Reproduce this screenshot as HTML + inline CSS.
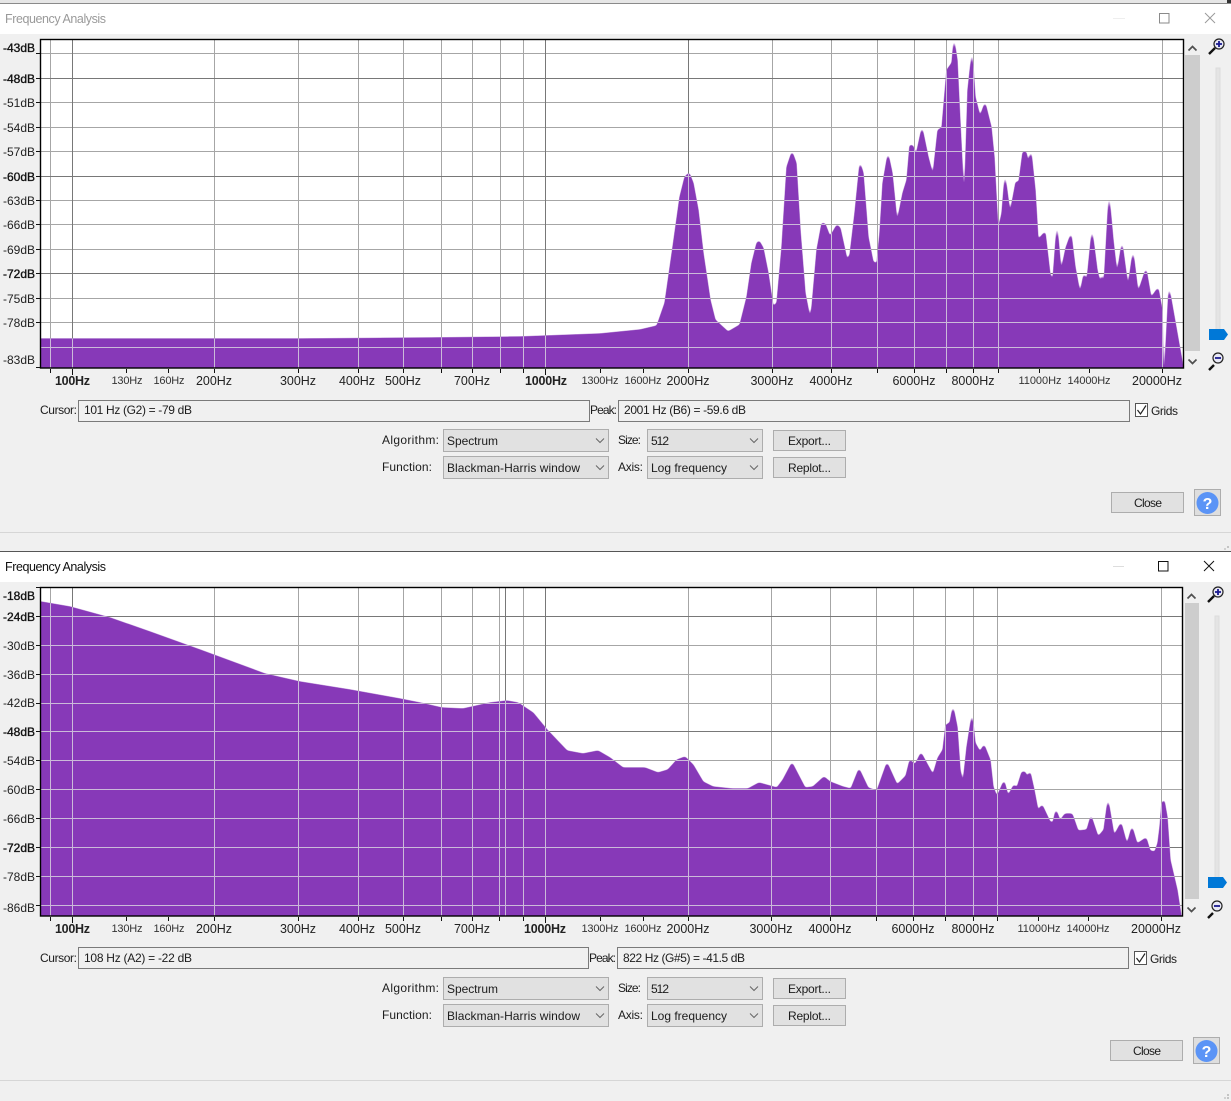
<!DOCTYPE html>
<html><head><meta charset="utf-8"><style>
html,body{margin:0;padding:0;background:#f0f0f0;width:1231px;height:1101px;overflow:hidden}
svg{display:block}
text{font-family:"Liberation Sans",sans-serif;font-size:12px;fill:#1c1c1c}
.s{font-size:11px;fill:#333}.m{font-size:12.5px;fill:#222}.b{font-size:12.5px;font-weight:bold;fill:#222}
.y{font-size:12px;text-anchor:end;fill:#222}.yb{font-size:12px;text-anchor:end;fill:#111;stroke:#111;stroke-width:.35}
.x text{text-anchor:middle}
.f{fill:#e1e1e1;stroke:#adadad}.bt{fill:#e1e1e1;stroke:#adadad}
.ch{fill:none;stroke:#666;stroke-width:1}
.box{fill:#f0f0f0;stroke:#7a7a7a}
</style></head><body>
<svg width="1231" height="1101" viewBox="0 0 1231 1101" xmlns="http://www.w3.org/2000/svg">
<defs>
<filter id="sm" filterUnits="userSpaceOnUse" x="0" y="0" width="1231" height="1101" color-interpolation-filters="sRGB">
<feGaussianBlur stdDeviation="1.2"/>
<feComponentTransfer><feFuncA type="linear" slope="4" intercept="-0.8"/></feComponentTransfer>
</filter>
<mask id="c1" maskUnits="userSpaceOnUse" x="0" y="0" width="1231" height="1101"><path fill="#fff" filter="url(#sm)" d="M30,378L30,339L41,339L300,339L430,338L520,337L600,334L640,330L657,326L665,303L673,247L680,197L685,177L689,173L693,183L698,210L703,253L710,300L715,320L728,332L740,325L747,297L752,263L757,243L759,241L763,248L768,273L773,307L777,303L782,247L787,167L792,152L796,163L800,230L805,293L810,319L812,307L817,250L822,223L825,224L830,237L837,225L840,228L847,260L850,255L855,213L860,163L863,173L868,237L873,262L877,264L880,233L883,183L888,154L892,173L897,223L903,193L907,180L910,145L913,146L916,156L922,128L928,157L933,176L938,130L942,128L947,70L952,63L954,40L957,60L960,123L963,183L965,185L968,90L972,53L975,97L980,117L985,103L991,127L994,157L998,232L1002,213L1005,176L1010,214L1016,182L1019,182L1023,152L1026,152L1028,163L1031,152L1035,190L1038,240L1045,232L1050,275L1053,280L1057,226L1061,272L1066,248L1071,234L1075,267L1080,294L1084,274L1087,281L1092,231L1097,270L1100,283L1102,275L1104,286L1109,196L1113,240L1117,275L1122,243L1128,288L1133,252L1138,293L1146,269L1151,298L1158,288L1162,310L1163,368L1165,366L1169,288L1183,367L1183,378Z"/></mask>
<mask id="c2" maskUnits="userSpaceOnUse" x="0" y="0" width="1231" height="1101"><path fill="#fff" filter="url(#sm)" d="M30,926L30,601L41,602L70,607L110,618L150,632L200,650L265,674L300,682L350,690L400,699L420,703L442,708L463,709L490,703L507,701L518,703L533,713L547,730L567,751L583,754L598,751L610,758L623,768L645,768L658,773L668,770L677,760L685,757L693,765L703,782L713,787L732,789L748,789L759,783L777,788L783,780L792,763L805,788L813,787L824,777L830,782L843,787L851,789L859,769L868,788L877,791L887,763L897,785L906,776L910,760L915,765L921,753L933,775L938,758L943,750L946,725L950,723L953,707L957,727L960,770L963,784L967,747L972,715L975,743L980,752L984,745L990,760L993,787L997,797L1004,781L1008,796L1014,785L1017,788L1022,772L1025,772L1027,777L1030,772L1034,790L1038,811L1042,805L1050,822L1053,823L1056,810L1060,821L1065,814L1072,814L1078,831L1087,830L1091,816L1098,837L1104,830L1108,800L1114,836L1121,823L1127,845L1132,827L1137,844L1146,838L1150,851L1155,852L1158,843L1160,827L1162,803L1164,800L1167,817L1170,860L1177,890L1181,916L1182,926Z"/></mask>
</defs>
<rect width="1231" height="1101" fill="#f0f0f0"/>

<!-- window 1 chrome -->
<rect x="0" y="0" width="1231" height="3" fill="#e6e6e6"/>
<rect x="0" y="3" width="1231" height="1" fill="#8a8a8a"/>
<rect x="1227" y="0" width="4" height="3" fill="#333"/>
<rect x="0" y="4" width="1231" height="30" fill="#fff"/>
<text x="5" y="23" textLength="101" style="fill:#9a9a9a;font-size:12.5px">Frequency Analysis</text>
<path d="M1113 18.5H1125" stroke="#eee" fill="none"/>
<rect x="1159.5" y="13.5" width="9.5" height="9.5" fill="none" stroke="#8a8a8a"/>
<path d="M1205 13L1215 23M1215 13L1205 23" stroke="#9a9a9a" fill="none"/>

<!-- plot 1 -->
<rect x="40" y="39" width="1144" height="329" fill="#fff"/>
<path shape-rendering="crispEdges" fill="none" stroke="#a6a6a6" d="M41 53.5H1183M41 102.5H1183M41 127.5H1183M41 151.5H1183M41 200.5H1183M41 224.5H1183M41 249.5H1183M41 298.5H1183M41 322.5H1183M41 347.5H1183M50.5 40V368M214.5 40V368M298.5 40V368M358.5 40V368M403.5 40V368M441.5 40V368M472.5 40V368M500.5 40V368M523.5 40V368M772.5 40V368M831.5 40V368M877.5 40V368M914.5 40V368M946.5 40V368M973.5 40V368M998.5 40V368M1162.5 40V368"/>
<path shape-rendering="crispEdges" fill="none" stroke="#787878" d="M41 78.5H1183M41 176.5H1183M41 273.5H1183M72.5 40V368M545.5 40V368M688.5 40V368"/>
<rect x="40" y="39" width="1144" height="329" fill="#8739b8" mask="url(#c1)"/>
<path mask="url(#c1)" shape-rendering="crispEdges" fill="none" stroke="#cbbad9" d="M41 53.5H1183M41 78.5H1183M41 102.5H1183M41 127.5H1183M41 151.5H1183M41 176.5H1183M41 200.5H1183M41 224.5H1183M41 249.5H1183M41 273.5H1183M41 298.5H1183M41 322.5H1183M41 347.5H1183M50.5 40V368M72.5 40V368M214.5 40V368M298.5 40V368M358.5 40V368M403.5 40V368M441.5 40V368M472.5 40V368M500.5 40V368M523.5 40V368M545.5 40V368M688.5 40V368M772.5 40V368M831.5 40V368M877.5 40V368M914.5 40V368M946.5 40V368M973.5 40V368M998.5 40V368M1162.5 40V368"/>
<rect x="40.5" y="39.5" width="1143" height="328.5" fill="none" stroke="#000" stroke-width="1.4"/>
<path shape-rendering="crispEdges" fill="none" stroke="#111" d="M36 53.5H40M36 78.5H40M36 102.5H40M36 127.5H40M36 151.5H40M36 176.5H40M36 200.5H40M36 224.5H40M36 249.5H40M36 273.5H40M36 298.5H40M36 322.5H40M36 367.5H40M50.5 369V373M72.5 369V375M126.5 369V373M168.5 369V373M214.5 369V373M298.5 369V373M358.5 369V373M403.5 369V373M441.5 369V373M472.5 369V373M500.5 369V373M523.5 369V373M545.5 369V375M600.5 369V373M643.5 369V373M688.5 369V373M772.5 369V373M831.5 369V373M877.5 369V373M914.5 369V373M946.5 369V373M973.5 369V373M998.5 369V373M1039.5 369V373M1089.5 369V373M1162.5 369V373"/>
<text class="yb" x="35" y="52">-43dB</text><text class="yb" x="35" y="83">-48dB</text><text class="y" x="35" y="107">-51dB</text><text class="y" x="35" y="132">-54dB</text><text class="y" x="35" y="156">-57dB</text><text class="yb" x="35" y="181">-60dB</text><text class="y" x="35" y="205">-63dB</text><text class="y" x="35" y="229">-66dB</text><text class="y" x="35" y="254">-69dB</text><text class="yb" x="35" y="278">-72dB</text><text class="y" x="35" y="303">-75dB</text><text class="y" x="35" y="327">-78dB</text><text class="y" x="35" y="364">-83dB</text>
<g class="x">
<text class="b" x="72.5" y="385" textLength="35">100Hz</text><text class="s" x="127" y="384" textLength="31">130Hz</text><text class="s" x="169" y="384" textLength="31">160Hz</text><text class="m" x="214" y="385" textLength="36">200Hz</text><text class="m" x="298" y="385" textLength="36">300Hz</text><text class="m" x="357" y="385" textLength="36">400Hz</text><text class="m" x="403" y="385" textLength="36">500Hz</text><text class="m" x="472" y="385" textLength="36">700Hz</text><text class="b" x="546" y="385" textLength="42">1000Hz</text><text class="s" x="600" y="384" textLength="37">1300Hz</text><text class="s" x="643" y="384" textLength="37">1600Hz</text><text class="m" x="688" y="385" textLength="43">2000Hz</text><text class="m" x="772" y="385" textLength="43">3000Hz</text><text class="m" x="831" y="385" textLength="43">4000Hz</text><text class="m" x="914" y="385" textLength="43">6000Hz</text><text class="m" x="973" y="385" textLength="43">8000Hz</text><text class="s" x="1040" y="384" textLength="43">11000Hz</text><text class="s" x="1089" y="384" textLength="43">14000Hz</text><text class="m" x="1157" y="385" textLength="50">20000Hz</text>
</g>
<!-- side 1 -->
<rect x="1185" y="55" width="15" height="296" fill="#cdcdcd"/>
<path d="M1188.5 50.5L1192.5 46.5L1196.5 50.5M1188.5 359.5L1192.5 363.5L1196.5 359.5" fill="none" stroke="#505050" stroke-width="1.7"/>
<rect x="1216" y="68" width="4" height="262" fill="#e4e4e4" stroke="#dcdcdc"/>
<path d="M1209 329H1224L1228 334.5L1224 340H1209Z" fill="#0078d7"/>
<g fill="none"><path d="M1215 48L1209 54" stroke="#111" stroke-width="2.4"/><circle cx="1219" cy="44" r="5" fill="#e8e8f4" stroke="#222" stroke-width="1.2"/><path d="M1216 44H1222M1219 41V47" stroke="#1a1a90" stroke-width="1.8"/>
<path d="M1214 365L1209 370" stroke="#111" stroke-width="2.4"/><circle cx="1218" cy="358" r="5" fill="#e8e8f4" stroke="#222" stroke-width="1.2"/><path d="M1215 358H1221" stroke="#1a1a90" stroke-width="1.8"/></g>
<!-- cursor row 1 -->
<text x="40" y="414" textLength="37">Cursor:</text>
<rect class="box" x="78.5" y="400.5" width="511" height="21"/>
<text x="84" y="414" textLength="108">101 Hz (G2) = -79 dB</text>
<text x="590" y="414" textLength="27">Peak:</text>
<rect class="box" x="618.5" y="400.5" width="511" height="21"/>
<text x="624" y="414" textLength="122">2001 Hz (B6) = -59.6 dB</text>
<rect x="1135.5" y="403.5" width="12" height="13" fill="#fff" stroke="#555"/>
<path d="M1137.5 410L1140.5 414L1146 405.5" fill="none" stroke="#222" stroke-width="1.2"/>
<text x="1151" y="415" textLength="27">Grids</text>
<!-- controls 1 -->
<text x="382" y="444" textLength="57">Algorithm:</text><text x="382" y="471" textLength="50">Function:</text>
<rect class="f" x="443.5" y="429.5" width="165" height="22"/><rect class="f" x="443.5" y="456.5" width="165" height="22"/>
<text x="447" y="445" textLength="51">Spectrum</text><text x="447" y="472" textLength="133">Blackman-Harris window</text>
<text x="618" y="444" textLength="23">Size:</text><text x="618" y="471" textLength="25">Axis:</text>
<rect class="f" x="647.5" y="429.5" width="115" height="22"/><rect class="f" x="647.5" y="456.5" width="115" height="22"/>
<path class="ch" d="M596 438.5L600 442.5L604 438.5M596 465.5L600 469.5L604 465.5M750 438.5L754 442.5L758 438.5M750 465.5L754 469.5L758 465.5"/>
<text x="651" y="445" textLength="18">512</text><text x="651" y="472" textLength="76">Log frequency</text>
<rect class="bt" x="773.5" y="430.5" width="72" height="20"/><rect class="bt" x="773.5" y="457.5" width="72" height="20"/>
<text x="788" y="445" textLength="43">Export...</text><text x="788" y="472" textLength="43">Replot...</text>
<rect class="bt" x="1111.5" y="492.5" width="72" height="20"/><text x="1134" y="507" textLength="28">Close</text>
<rect x="1194.5" y="489.5" width="26" height="26" fill="#dedede" stroke="#adadad"/>
<circle cx="1207.5" cy="503" r="11" fill="#5b94f6"/>
<text x="1207.5" y="509" text-anchor="middle" style="font-size:16px;font-weight:bold;fill:#fff">?</text>
<rect x="0" y="532" width="1231" height="1" fill="#d6d6d6"/>
<rect x="1227" y="546" width="2" height="2" fill="#c4c4c4"/><rect x="1224" y="548" width="2" height="2" fill="#d0d0d0"/>

<!-- window 2 chrome -->
<rect x="0" y="551" width="1231" height="1" fill="#555"/>
<rect x="0" y="552" width="1231" height="30" fill="#fff"/>
<text x="5" y="571" textLength="101" style="fill:#111;font-size:12.5px">Frequency Analysis</text>
<path d="M1113 566.5H1124" stroke="#ddd" fill="none"/>
<rect x="1158.5" y="561.5" width="9.5" height="9.5" fill="none" stroke="#111"/>
<path d="M1204 561L1214 571M1214 561L1204 571" stroke="#111" fill="none"/>

<!-- plot 2 -->
<rect x="40" y="587" width="1143" height="329" fill="#fff"/>
<path shape-rendering="crispEdges" fill="none" stroke="#a6a6a6" d="M41 645.5H1182M41 674.5H1182M41 703.5H1182M41 760.5H1182M41 789.5H1182M41 818.5H1182M41 876.5H1182M41 905.5H1182M50.5 588V916M214.5 588V916M298.5 588V916M358.5 588V916M403.5 588V916M441.5 588V916M472.5 588V916M499.5 588V916M523.5 588V916M771.5 588V916M830.5 588V916M876.5 588V916M913.5 588V916M945.5 588V916M973.5 588V916M997.5 588V916M1161.5 588V916M688.5 588V916"/>
<path shape-rendering="crispEdges" fill="none" stroke="#787878" d="M41 616.5H1182M41 731.5H1182M41 847.5H1182M72.5 588V916M505.5 588V916M545.5 588V916"/>
<rect x="40" y="587" width="1143" height="329" fill="#8739b8" mask="url(#c2)"/>
<path mask="url(#c2)" shape-rendering="crispEdges" fill="none" stroke="#cbbad9" d="M41 616.5H1182M41 645.5H1182M41 674.5H1182M41 703.5H1182M41 731.5H1182M41 760.5H1182M41 789.5H1182M41 818.5H1182M41 847.5H1182M41 876.5H1182M41 905.5H1182M50.5 588V916M72.5 588V916M214.5 588V916M298.5 588V916M358.5 588V916M403.5 588V916M441.5 588V916M472.5 588V916M499.5 588V916M505.5 588V916M523.5 588V916M545.5 588V916M688.5 588V916M771.5 588V916M830.5 588V916M876.5 588V916M913.5 588V916M945.5 588V916M973.5 588V916M997.5 588V916M1161.5 588V916"/>
<rect x="40.5" y="587.5" width="1142" height="328.5" fill="none" stroke="#000" stroke-width="1.4"/>
<path shape-rendering="crispEdges" fill="none" stroke="#111" d="M36 587.5H40M36 616.5H40M36 645.5H40M36 674.5H40M36 703.5H40M36 731.5H40M36 760.5H40M36 789.5H40M36 818.5H40M36 847.5H40M36 876.5H40M36 905.5H40M50.5 917V921M72.5 917V923M126.5 917V921M168.5 917V921M214.5 917V921M298.5 917V921M358.5 917V921M403.5 917V921M441.5 917V921M472.5 917V921M499.5 917V921M523.5 917V921M545.5 917V923M600.5 917V921M643.5 917V921M688.5 917V921M771.5 917V921M830.5 917V921M876.5 917V921M913.5 917V921M945.5 917V921M973.5 917V921M997.5 917V921M1038.5 917V921M1088.5 917V921M1161.5 917V921"/>
<text class="yb" x="35" y="600">-18dB</text><text class="yb" x="35" y="621">-24dB</text><text class="y" x="35" y="650">-30dB</text><text class="y" x="35" y="679">-36dB</text><text class="y" x="35" y="707">-42dB</text><text class="yb" x="35" y="736">-48dB</text><text class="y" x="35" y="765">-54dB</text><text class="y" x="35" y="794">-60dB</text><text class="y" x="35" y="823">-66dB</text><text class="yb" x="35" y="852">-72dB</text><text class="y" x="35" y="881">-78dB</text><text class="y" x="35" y="912">-86dB</text>
<g class="x">
<text class="b" x="72.5" y="933" textLength="35">100Hz</text><text class="s" x="127" y="932" textLength="31">130Hz</text><text class="s" x="169" y="932" textLength="31">160Hz</text><text class="m" x="214" y="933" textLength="36">200Hz</text><text class="m" x="298" y="933" textLength="36">300Hz</text><text class="m" x="357" y="933" textLength="36">400Hz</text><text class="m" x="403" y="933" textLength="36">500Hz</text><text class="m" x="472" y="933" textLength="36">700Hz</text><text class="b" x="545" y="933" textLength="42">1000Hz</text><text class="s" x="600" y="932" textLength="37">1300Hz</text><text class="s" x="643" y="932" textLength="37">1600Hz</text><text class="m" x="688" y="933" textLength="43">2000Hz</text><text class="m" x="771" y="933" textLength="43">3000Hz</text><text class="m" x="830" y="933" textLength="43">4000Hz</text><text class="m" x="913" y="933" textLength="43">6000Hz</text><text class="m" x="973" y="933" textLength="43">8000Hz</text><text class="s" x="1039" y="932" textLength="43">11000Hz</text><text class="s" x="1088" y="932" textLength="43">14000Hz</text><text class="m" x="1156" y="933" textLength="50">20000Hz</text>
</g>
<!-- side 2 -->
<rect x="1185" y="603" width="14" height="296" fill="#cdcdcd"/>
<path d="M1187.5 598.5L1191.5 594.5L1195.5 598.5M1187.5 907.5L1191.5 911.5L1195.5 907.5" fill="none" stroke="#505050" stroke-width="1.7"/>
<rect x="1215" y="616" width="4" height="262" fill="#e4e4e4" stroke="#dcdcdc"/>
<path d="M1208 877H1223L1227 882.5L1223 888H1208Z" fill="#0078d7"/>
<g fill="none"><path d="M1214 596L1208 602" stroke="#111" stroke-width="2.4"/><circle cx="1218" cy="592" r="5" fill="#e8e8f4" stroke="#222" stroke-width="1.2"/><path d="M1215 592H1221M1218 589V595" stroke="#1a1a90" stroke-width="1.8"/>
<path d="M1213 913L1208 918" stroke="#111" stroke-width="2.4"/><circle cx="1217" cy="906" r="5" fill="#e8e8f4" stroke="#222" stroke-width="1.2"/><path d="M1214 906H1220" stroke="#1a1a90" stroke-width="1.8"/></g>
<!-- cursor row 2 -->
<text x="40" y="962" textLength="37">Cursor:</text>
<rect class="box" x="78.5" y="947.5" width="510" height="21"/>
<text x="84" y="962" textLength="108">108 Hz (A2) = -22 dB</text>
<text x="589" y="962" textLength="27">Peak:</text>
<rect class="box" x="617.5" y="947.5" width="511" height="21"/>
<text x="623" y="962" textLength="122">822 Hz (G#5) = -41.5 dB</text>
<rect x="1134.5" y="951.5" width="12" height="13" fill="#fff" stroke="#555"/>
<path d="M1136.5 958L1139.5 962L1145 953.5" fill="none" stroke="#222" stroke-width="1.2"/>
<text x="1150" y="963" textLength="27">Grids</text>
<!-- controls 2 -->
<text x="382" y="992" textLength="57">Algorithm:</text><text x="382" y="1019" textLength="50">Function:</text>
<rect class="f" x="443.5" y="977.5" width="165" height="22"/><rect class="f" x="443.5" y="1004.5" width="165" height="22"/>
<text x="447" y="993" textLength="51">Spectrum</text><text x="447" y="1020" textLength="133">Blackman-Harris window</text>
<text x="618" y="992" textLength="23">Size:</text><text x="618" y="1019" textLength="25">Axis:</text>
<rect class="f" x="647.5" y="977.5" width="115" height="22"/><rect class="f" x="647.5" y="1004.5" width="115" height="22"/>
<path class="ch" d="M596 986.5L600 990.5L604 986.5M596 1013.5L600 1017.5L604 1013.5M750 986.5L754 990.5L758 986.5M750 1013.5L754 1017.5L758 1013.5"/>
<text x="651" y="993" textLength="18">512</text><text x="651" y="1020" textLength="76">Log frequency</text>
<rect class="bt" x="773.5" y="978.5" width="72" height="20"/><rect class="bt" x="773.5" y="1005.5" width="72" height="20"/>
<text x="788" y="993" textLength="43">Export...</text><text x="788" y="1020" textLength="43">Replot...</text>
<rect class="bt" x="1110.5" y="1040.5" width="72" height="20"/><text x="1133" y="1055" textLength="28">Close</text>
<rect x="1193.5" y="1037.5" width="26" height="26" fill="#dedede" stroke="#adadad"/>
<circle cx="1206.5" cy="1051" r="11" fill="#5b94f6"/>
<text x="1206.5" y="1057" text-anchor="middle" style="font-size:16px;font-weight:bold;fill:#fff">?</text>
<rect x="0" y="1080" width="1231" height="1" fill="#d6d6d6"/>
<rect x="1227" y="1094" width="2" height="2" fill="#c4c4c4"/><rect x="1224" y="1097" width="2" height="2" fill="#d0d0d0"/><rect x="1227" y="1097" width="2" height="2" fill="#c4c4c4"/>
</svg>
</body></html>
